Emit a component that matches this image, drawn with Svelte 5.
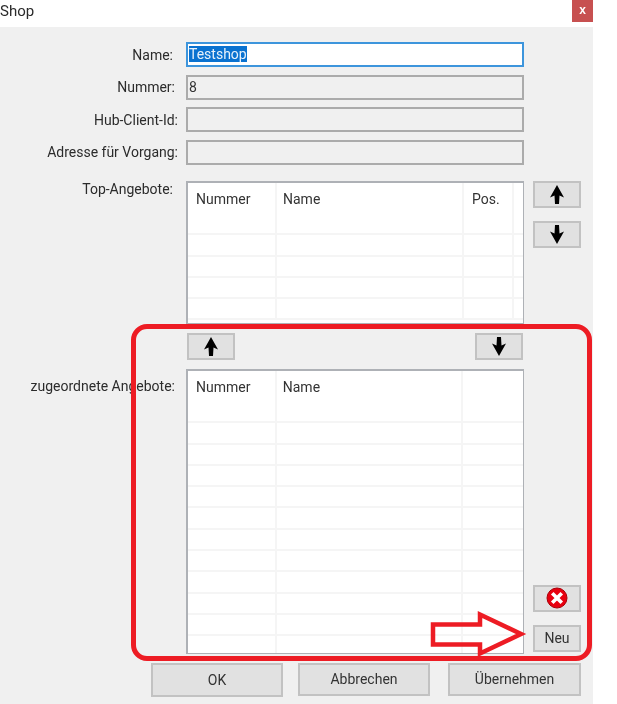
<script lang="ts">
	const fields = [
		{ label: 'Name:', value: 'Testshop', focused: true, nudge: 'n1' },
		{ label: 'Nummer:', value: '8', focused: false, nudge: 'n2' },
		{ label: 'Hub-Client-Id:', value: '', focused: false, nudge: 'n3' },
		{ label: 'Adresse für Vorgang:', value: '', focused: false, nudge: 'n3' }
	];
	const topRows = Array.from({ length: 5 }, (_, i) => i);
	const assignedRows = Array.from({ length: 12 }, (_, i) => i);
	const upPath = 'M7 0 L14 12.5 L9.5 10.5 L9 19 L5 19 L4.5 10.5 L0 12.5 Z';
	const downPath = 'M5 0 L9 0 L9.5 8.5 L14 6.5 L7 19 L0 6.5 L4.5 8.5 Z';
</script>

<div class="page">
	<div class="window">
		<header class="titlebar">
			<span class="title">Shop</span>
			<button class="close">x</button>
		</header>

		<div class="fields">
			{#each fields as f}
				<label class="field-label {f.nudge}" for={f.label}>{f.label}</label>
				<div class="input" class:focused={f.focused} id={f.label}>
					{#if f.focused}<span class="selected">{f.value}</span>{:else}{f.value}{/if}
				</div>
			{/each}
		</div>

		<div class="lists">
			<div class="list-label">Top-Angebote:</div>
			<div class="grid top-grid">
				<div class="head">
					<span class="c1">Nummer</span>
					<span class="c2">Name</span>
					<span class="c3">Pos.</span>
					<span class="c4"></span>
				</div>
				{#each topRows as r (r)}
					<div class="row">
						<span class="c1"></span>
						<span class="c2"></span>
						<span class="c3"></span>
						<span class="c4"></span>
					</div>
				{/each}
			</div>
			<div class="side">
				<button class="btn small"><svg width="14" height="19" viewBox="0 0 14 19"><path d={upPath} /></svg></button>
				<button class="btn small"><svg width="14" height="19" viewBox="0 0 14 19"><path d={downPath} /></svg></button>
			</div>

			<div class="move">
				<button class="btn small"><svg width="14" height="19" viewBox="0 0 14 19"><path d={upPath} /></svg></button>
				<button class="btn small"><svg width="14" height="19" viewBox="0 0 14 19"><path d={downPath} /></svg></button>
			</div>

			<div class="list-label second">zugeordnete Angebote:</div>
			<div class="grid assigned-grid">
				<div class="head">
					<span class="c1">Nummer</span>
					<span class="c2">Name</span>
					<span class="c3"></span>
				</div>
				{#each assignedRows as r (r)}
					<div class="row">
						<span class="c1"></span>
						<span class="c2"></span>
						<span class="c3"></span>
					</div>
				{/each}
			</div>
			<div class="side bottom">
				<button class="btn small">
					<svg width="22" height="22" viewBox="0 0 22 22">
						<circle cx="11" cy="11" r="10" fill="#e8000f" stroke="#a80008" stroke-width="1" />
						<path d="M7.5 7.5 L14.5 14.5 M14.5 7.5 L7.5 14.5" stroke="#fff" stroke-width="3.6" stroke-linecap="square" />
					</svg>
				</button>
				<button class="btn small">Neu</button>
			</div>
		</div>

		<div class="actions">
			<button class="btn action ok">OK</button>
			<button class="btn action cancel">Abbrechen</button>
			<button class="btn action apply">Übernehmen</button>
		</div>
	</div>

	<div class="callout"></div>
	<svg class="arrow" width="110" height="60" viewBox="425 604 110 60">
		<path d="M433 624.5 L480 624.5 L480 614.5 L521 634 L480 653.5 L480 644.5 L433 644.5 Z" />
	</svg>
</div>

<style>
	:global(body) {
		background: #fff;
	}

	.page {
		position: relative;
		width: 617px;
		height: 704px;
		overflow: hidden;
		font-family: Roboto, 'Liberation Sans', Arial, sans-serif;
		font-size: 14px;
		color: #2b2b2b;
	}

	.window {
		width: 593px;
		height: 704px;
		background: #f0f0f0;
		filter: blur(0.35px);
	}

	.titlebar {
		height: 27px;
		background: #fff;
		display: flex;
		justify-content: space-between;
		align-items: flex-start;
	}

	.title {
		font-size: 15px;
		line-height: 22px;
	}

	.close {
		width: 21px;
		height: 22px;
		border: 0;
		padding: 0 0 3px;
		background: #c75050;
		color: #fff;
		font: bold 12px 'Liberation Sans', Arial, sans-serif;
	}

	.fields {
		display: grid;
		grid-template-columns: 186px 338px;
		grid-auto-rows: 25px;
		row-gap: 7.67px;
		padding-top: 15px;
	}

	.field-label {
		align-self: center;
		text-align: right;
		white-space: nowrap;
	}
	.n1 {
		padding-right: 13px;
	}
	.n2 {
		padding-right: 11px;
	}
	.n3 {
		padding-right: 8px;
	}

	.input {
		box-sizing: border-box;
		border: 2px solid #ababab;
		padding-left: 1px;
		line-height: 21px;
		color: #333;
	}

	.input.focused {
		border-color: #3d95dc;
		background: #fff;
	}

	.selected {
		display: inline-block;
		background: #0a72d0;
		color: #e8f2fb;
		line-height: 16px;
	}

	.lists {
		display: grid;
		grid-template-columns: 186px 338px 57px;
		padding-top: 16px;
	}

	.list-label {
		text-align: right;
		padding: 1px 13px 0 0;
		line-height: 14px;
		white-space: nowrap;
	}

	.list-label.second {
		grid-column: 1;
		padding: 10px 11px 0 0;
	}

	.grid {
		box-sizing: border-box;
		border: 2px solid #aeb1b6;
		border-right-width: 1px;
		border-bottom-width: 1px;
		background: #fff;
		overflow: hidden;
	}

	.top-grid {
		height: 143px;
	}

	.assigned-grid {
		height: 285px;
	}

	.head,
	.row {
		display: flex;
		height: 21.3px;
		box-sizing: border-box;
		border-bottom: 2px solid #f5f5f5;
	}

	.head {
		height: 31px;
		border-bottom: 0;
		line-height: 32px;
		color: #333;
	}

	.c1,
	.c2,
	.c3,
	.c4 {
		box-sizing: border-box;
		padding-left: 8px;
		border-right: 2px solid #f5f5f5;
	}

	.c1 {
		width: 89px;
	}

	.c2 {
		width: 187px;
		padding-left: 6px;
	}

	.c3 {
		width: 50px;
	}

	.assigned-grid .c3 {
		width: 60px;
		border-right: 0;
	}

	.c4 {
		flex: 1;
		border-right: 0;
	}

	.side {
		display: flex;
		flex-direction: column;
		gap: 13px;
		align-items: flex-end;
	}

	.side.bottom {
		justify-content: flex-end;
		padding-bottom: 2px;
	}

	.move {
		grid-column: 2;
		display: flex;
		justify-content: space-between;
		padding: 9px 1px;
	}

	.btn {
		box-sizing: border-box;
		background: #e1e1e1;
		border: 2px solid #c2c2c2;
		padding: 0;
		display: flex;
		align-items: center;
		justify-content: center;
		font: 14px Roboto, 'Liberation Sans', Arial, sans-serif;
		color: #333;
	}

	.btn svg path {
		fill: #000;
	}

	.btn svg path[stroke] {
		fill: none;
	}

	.small {
		width: 48px;
		height: 27px;
	}

	.actions {
		display: flex;
		padding: 9px 0 0 151px;
		align-items: flex-start;
	}

	.action {
		width: 132px;
		height: 34px;
	}

	.cancel {
		margin-left: 15px;
		height: 33px;
	}

	.apply {
		margin-left: 18px;
		width: 133px;
		height: 33px;
	}

	/* red annotation drawn on top of the dialog */
	.callout {
		position: absolute;
		left: 131px;
		top: 324px;
		width: 461px;
		height: 337px;
		box-sizing: border-box;
		border: 5px solid #ed1c24;
		border-radius: 16px;
	}

	.arrow {
		position: absolute;
		left: 425px;
		top: 604px;
	}

	.arrow path {
		fill: none;
		stroke: #ed1c24;
		stroke-width: 4.5;
		stroke-linejoin: miter;
	}
</style>
